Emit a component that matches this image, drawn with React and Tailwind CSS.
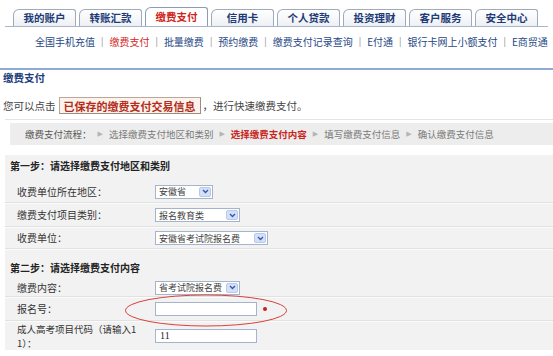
import React from 'react';

const tabs = ['我的账户', '转账汇款', '缴费支付', '信用卡', '个人贷款', '投资理财', '客户服务', '安全中心'];
const subnav = ['全国手机充值', '缴费支付', '批量缴费', '预约缴费', '缴费支付记录查询', 'E付通', '银行卡网上小额支付', 'E商贸通'];
const steps = ['选择缴费支付地区和类别', '选择缴费支付内容', '填写缴费支付信息', '确认缴费支付信息'];

function Sep() {
  return <div className="h-[2px] border-t border-[#e1e1e1] border-b border-b-[#fbfbfb]" />;
}

function Select({ value, width }) {
  return (
    <div className={`${width} h-[14px] flex items-center border border-[#a3b4cc] bg-white`}>
      <span className="pl-[3px] text-[9px] leading-none text-[#444] whitespace-nowrap">{value}</span>
      <span className="ml-auto mr-[1px] w-[12px] h-[10px] flex items-center justify-center rounded-[2px] border border-[#b8c9ea] bg-[#d3e0f7]">
        <svg width="7" height="5" viewBox="0 0 7 5">
          <path d="M1 1 L3.5 3.5 L6 1" fill="none" stroke="#3358b0" strokeWidth="1.4" />
        </svg>
      </span>
    </div>
  );
}

function Input({ value }) {
  return (
    <div className="w-[102px] h-[14px] flex items-center border border-[#a3b4cc] bg-white pl-[4px] text-[10px] leading-none text-[#222] font-['Liberation_Serif',serif]">
      {value}
    </div>
  );
}

function Row({ label, h, children }) {
  return (
    <div className={`${h} flex items-center`}>
      <div className="w-[150px] pl-[12px] text-[#333]">{label}</div>
      {children}
    </div>
  );
}

export default function App() {
  return (
    <div className="relative w-[553px] h-[356px] overflow-hidden bg-white font-['Noto_Sans_CJK_SC',sans-serif] text-[10px] leading-[12px] text-[#333]">
      {/* top tabs */}
      <div className="mx-[5px] pt-[7px] border-b border-[#a9b6c8]">
        <div className="flex items-end gap-[3px] pl-[8px]">
          {tabs.map((t) =>
            t === '缴费支付' ? (
              <div key={t} className="w-[63px] h-[19px] flex items-center justify-center rounded-tl-[6px] rounded-tr-[3px] border border-b-0 border-[#8c9bb2] bg-white text-[10.5px] font-bold text-[#cf2419]">
                {t}
              </div>
            ) : (
              <div key={t} className="w-[63px] h-[17px] flex items-center justify-center rounded-tl-[6px] rounded-tr-[3px] border border-b-0 border-[#9eabbe] bg-gradient-to-b from-white to-[#edf0f4] text-[10.5px] font-bold text-[#1d3b77]">
                {t}
              </div>
            )
          )}
        </div>
      </div>

      {/* sub navigation */}
      <div className="mt-[9px] pl-[35px] flex items-center text-[10px] text-[#254784] whitespace-nowrap">
        {subnav.map((s, i) => (
          <React.Fragment key={s}>
            {i > 0 && <span className="px-[6px] text-[#8a8a8a] text-[9px]">|</span>}
            <span className={s === '缴费支付' ? 'text-[#d2291f]' : ''}>{s}</span>
          </React.Fragment>
        ))}
      </div>

      <div className="mt-[20px] h-[2px] bg-[#8ea9d4]" />

      <div className="mt-[2px] pl-[3px] text-[10.5px] font-bold text-[#1e3d7b]">缴费支付</div>

      <div className="mt-[13px] pl-[3px] h-[17px] flex items-center text-[10.5px] text-[#444]">
        <span>您可以点击</span>
        <span className="ml-[3px] h-[17px] w-[142px] flex items-center justify-center border border-[#b8a79a] border-r-[#9d8c80] border-b-[#9d8c80] bg-[#fbf3ec] text-[11px] font-bold text-[#b42d1c]">
          已保存的缴费支付交易信息
        </span>
        <span className="ml-[2px]">，进行快速缴费支付。</span>
      </div>

      <div className="mt-[5px] ml-[5px] h-px bg-[#e4e4e4]" />

      {/* process bar */}
      <div className="mt-[3px] ml-[10px] h-[22px] pl-[15px] flex items-center bg-[#ededed] text-[9.5px] text-[#7a7a7a] whitespace-nowrap">
        <span className="text-[#555]">缴费支付流程：</span>
        {steps.map((s, i) => (
          <React.Fragment key={s}>
            <span className="px-[6px] text-[7px] text-[#b5b5b5] font-['DejaVu_Sans',sans-serif]">▶</span>
            <span className={i === 1 ? 'font-bold text-[#c8261b]' : ''}>{s}</span>
          </React.Fragment>
        ))}
      </div>

      {/* form panel */}
      <div className="mt-[10px] ml-[5px] h-[195px] bg-[#f2f2f2]">
        <div className="h-[22px] pl-[5px] flex items-center font-bold text-[#222]">第一步：请选择缴费支付地区和类别</div>
        <Row label="收费单位所在地区：" h="h-[25px] pt-[4px]">
          <Select value="安徽省" width="w-[58px]" />
        </Row>
        <Sep />
        <Row label="缴费支付项目类别：" h="h-[22px]">
          <Select value="报名教育类" width="w-[85px]" />
        </Row>
        <Sep />
        <Row label="收费单位：" h="h-[20px]">
          <Select value="安徽省考试院报名费" width="w-[113px]" />
        </Row>
        <Sep />
        <div className="h-[29px] pt-[6px] pl-[5px] flex items-center font-bold text-[#222]">第二步：请选择缴费支付内容</div>
        <Row label="缴费内容：" h="h-[17px]">
          <Select value="省考试院报名费" width="w-[85px]" />
        </Row>
        <Sep />
        <Row label="报名号：" h="h-[22px]">
          <Input value="" />
          <span className="ml-[6px] w-[4px] h-[4px] rounded-full bg-[#c0241c]" />
        </Row>
        <Sep />
        <Row label={<span className="block text-[9.5px] leading-[14px]">成人高考项目代码（请输入1<br />1）：</span>} h="h-[28px]">
          <Input value="11" />
        </Row>
      </div>

      {/* red highlight ellipse */}
      <svg className="absolute left-[124px] top-[293px]" width="164" height="35" viewBox="0 0 164 35">
        <ellipse cx="82" cy="17.5" rx="80.5" ry="15.5" fill="none" stroke="#d8413a" strokeWidth="1" />
      </svg>
    </div>
  );
}
